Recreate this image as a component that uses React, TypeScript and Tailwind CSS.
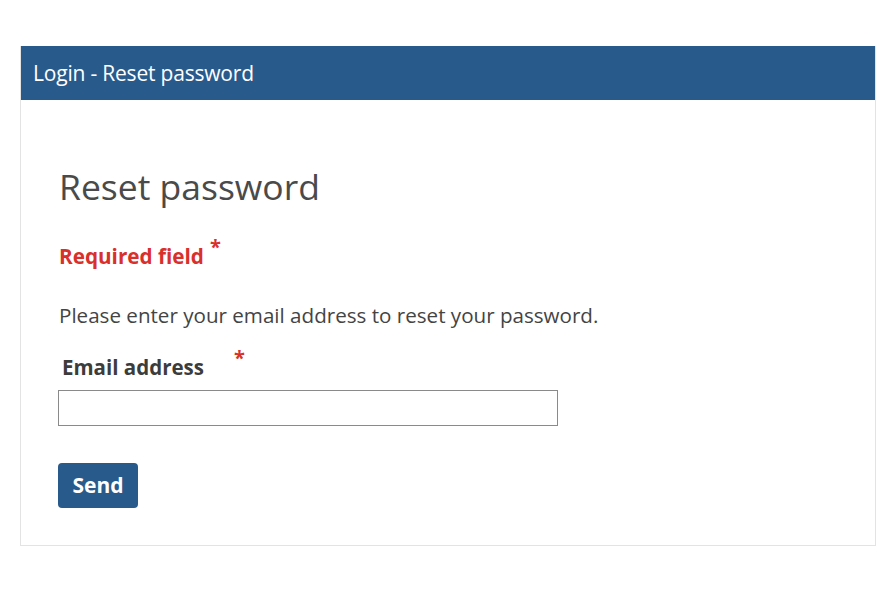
export default function App() {
  return (
    <div className="min-h-[592px] w-[881px] bg-white pt-[46px] pl-[20px] pr-[5px] font-['Open_Sans',sans-serif]">
      <div className="border border-[#e3e3e3] border-t-0">
        <div className="h-[54px] bg-[#285a8c] pl-[12px] flex items-center">
          <span className="text-[21px] text-white tracking-[-0.2px] pt-[2px]">Login - Reset password</span>
        </div>
        <div className="pl-[37px] pt-[62px] pb-[37px]">
          <h1 className="text-[35.5px] leading-[48px] text-[#4a4a4a] pl-[1px]">Reset password</h1>
          <p className="mt-[32px] text-[20.7px] font-bold text-[#d9302c] leading-[28px] pl-[1px]">
            Required field<sup className="ml-[6px] text-[20px] font-bold text-[#d9302c]">*</sup>
          </p>
          <p className="mt-[30px] text-[20.6px] text-[#444] leading-[30px] pl-[1px]">
            Please enter your email address to reset your password.
          </p>
          <label className="mt-[22px] flex items-start text-[20.5px] font-bold text-[#3c3c3c] leading-[30px] pl-[4px]">
            Email address
            <span className="ml-[30px] -mt-[9px] text-[20px] font-bold text-[#d9302c]">*</span>
          </label>
          <input
            type="email"
            className="mt-[8px] block w-[500px] h-[36px] border border-[#8a8a8a] bg-white outline-none px-2"
          />
          <button className="mt-[37px] block w-[80px] h-[45px] rounded-[4px] bg-[#285a8c] text-white text-[21px] font-bold">
            Send
          </button>
        </div>
      </div>
    </div>
  )
}
